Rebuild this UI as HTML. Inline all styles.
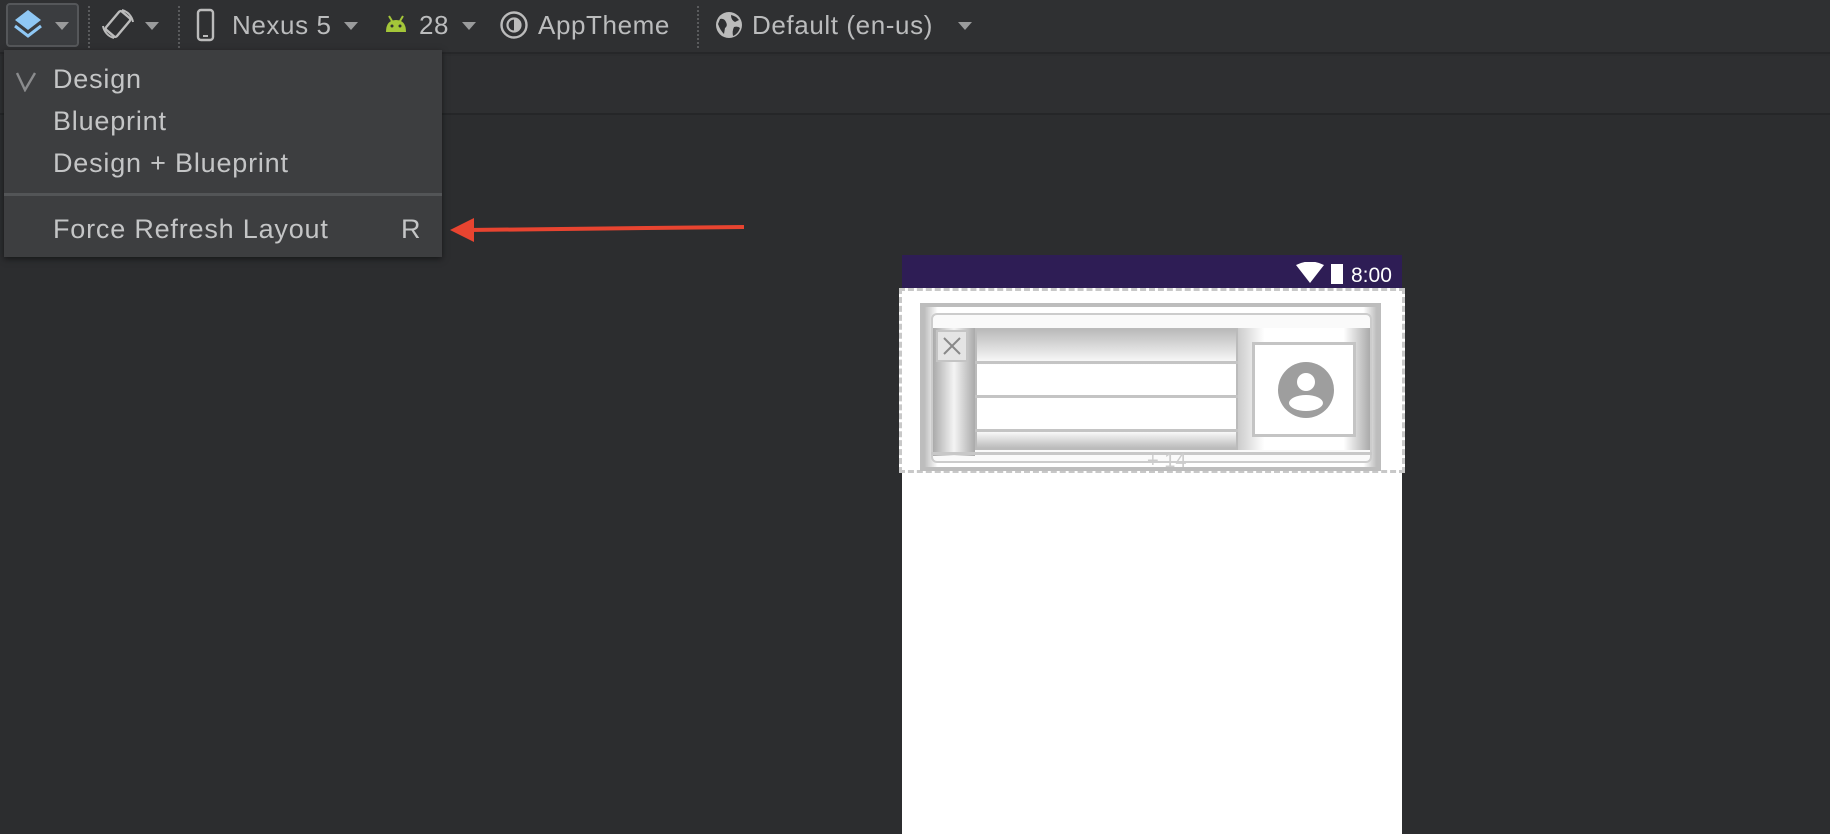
<!DOCTYPE html>
<html><head><meta charset="utf-8"><style>
*{margin:0;padding:0;box-sizing:border-box}
body{width:1830px;height:834px;overflow:hidden;background:#2c2d2f;font-family:"Liberation Sans",sans-serif;position:relative;color:#bbbcbd}
.abs{position:absolute}
.tb{left:0;top:0;width:1830px;height:54px;background:#2f3032;border-bottom:2px solid #262729}
.tb2{left:0;top:56px;width:1830px;height:59px;background:#2e2f31;border-bottom:2px solid #252628}
.t{font-size:26px;color:#bbbcbd;top:10px;white-space:nowrap;letter-spacing:0.6px}
.sep{width:0;border-left:2px dotted #5a5b5d;top:6px;height:42px}
.menu{left:4px;top:50px;width:438px;height:207px;background:#3d3e40;box-shadow:0 2px 6px rgba(0,0,0,.5)}
.mi{font-size:27px;color:#c4c5c6;left:49px;white-space:nowrap;letter-spacing:0.8px}
.phone{left:902px;top:255px;width:500px;height:579px;background:#fff}
</style></head><body>
<div class="abs tb"></div>
<div class="abs tb2"></div>
<div class="abs" style="left:6px;top:3px;width:73px;height:44px;border:2px solid #55575a;border-radius:4px;background:#3b3d40"></div>
<svg class="abs" style="left:10px;top:8px" width="36" height="34" viewBox="0 0 36 34"><path d="M18 2 L31 12 L18 22 L5 12Z" fill="#8fc8f5"/><path d="M5 18 L18 28 L31 18" stroke="#8fc8f5" stroke-width="3" fill="none"/></svg>
<svg class="abs" style="left:55px;top:22px" width="14" height="9"><path d="M0 0H14L7 8Z" fill="#9a9b9c"/></svg>
<div class="abs sep" style="left:88px"></div>
<svg class="abs" style="left:100px;top:6px" width="36" height="36" viewBox="0 0 36 36"><rect x="11" y="6" width="14" height="24" rx="2" transform="rotate(40 18 18)" stroke="#bbb" stroke-width="2.4" fill="none"/><path d="M3 20a15 15 0 0 0 11 12M33 16a15 15 0 0 0-11-12" stroke="#bbb" stroke-width="2" fill="none"/></svg>
<svg class="abs" style="left:145px;top:22px" width="14" height="9"><path d="M0 0H14L7 8Z" fill="#9a9b9c"/></svg>
<div class="abs sep" style="left:178px"></div>
<svg class="abs" style="left:196px;top:8px" width="20" height="34"><rect x="2" y="2" width="15" height="30" rx="3" stroke="#bbb" stroke-width="2.4" fill="none"/><line x1="7" y1="28" x2="12" y2="28" stroke="#bbb" stroke-width="2"/></svg>
<div class="abs t" style="left:232px">Nexus 5</div>
<svg class="abs" style="left:344px;top:22px" width="14" height="9"><path d="M0 0H14L7 8Z" fill="#9a9b9c"/></svg>
<svg class="abs" style="left:384px;top:14px" width="24" height="20"><path d="M2 18 Q2 6 12 6 Q22 6 22 18Z" fill="#a4c639"/><line x1="5" y1="2" x2="8" y2="7" stroke="#a4c639" stroke-width="2"/><line x1="19" y1="2" x2="16" y2="7" stroke="#a4c639" stroke-width="2"/><circle cx="8" cy="12" r="1.5" fill="#2f3032"/><circle cx="16" cy="12" r="1.5" fill="#2f3032"/></svg>
<div class="abs t" style="left:419px">28</div>
<svg class="abs" style="left:462px;top:22px" width="14" height="9"><path d="M0 0H14L7 8Z" fill="#9a9b9c"/></svg>
<svg class="abs" style="left:499px;top:10px" width="30" height="30"><circle cx="15" cy="15" r="12.5" stroke="#bbb" stroke-width="2.4" fill="none"/><circle cx="15" cy="15" r="6.5" stroke="#bbb" stroke-width="2.2" fill="none"/><path d="M15 8.5a6.5 6.5 0 0 1 0 13Z" fill="#bbb"/></svg>
<div class="abs t" style="left:538px">AppTheme</div>
<div class="abs sep" style="left:697px"></div>
<svg class="abs" style="left:714px;top:10px" width="30" height="30"><circle cx="15" cy="15" r="13" fill="#bbb"/><path d="M6 9 Q10 8 12 12 Q14 16 11 18 L10 24 Q6 20 4 14Z M17 5 Q22 6 25 10 L21 12 Q17 10 17 5Z M20 17 Q24 16 26 18 Q24 24 19 26 Q18 21 20 17Z" fill="#2f3032"/></svg>
<div class="abs t" style="left:752px">Default (en-us)</div>
<svg class="abs" style="left:958px;top:22px" width="14" height="9"><path d="M0 0H14L7 8Z" fill="#9a9b9c"/></svg>

<div class="abs menu">
<svg class="abs" style="left:11px;top:20px" width="22" height="22"><path d="M2 3 L10 20 L20 3" stroke="#8a8b8d" stroke-width="2.4" fill="none"/></svg>
<div class="abs mi" style="top:14px">Design</div>
<div class="abs mi" style="top:56px">Blueprint</div>
<div class="abs mi" style="top:98px">Design + Blueprint</div>
<div class="abs" style="left:0;top:143px;width:438px;height:3px;background:#535557"></div>
<div class="abs mi" style="top:164px">Force Refresh Layout</div>
<div class="abs mi" style="top:164px;left:397px">R</div>
</div>
<svg class="abs" style="left:448px;top:212px" width="300" height="34"><line x1="296" y1="15" x2="20" y2="18" stroke="#e84430" stroke-width="4"/><path d="M2 18 L26 6 L26 30Z" fill="#e84430"/></svg>

<div class="abs phone"></div>
<div class="abs" style="left:902px;top:255px;width:500px;height:33px;background:#2e1d55"></div>
<svg class="abs" style="left:1296px;top:262px" width="30" height="22"><path d="M0 3 Q14 -4 28 3 L14 21Z" fill="#fff"/></svg>
<div class="abs" style="left:1331px;top:264px;width:12px;height:20px;background:#fff"></div>
<div class="abs" style="left:1351px;top:264px;font-size:21px;color:#fff">8:00</div>
<div class="abs" style="left:899px;top:288px;width:506px;height:185px;border:3px dashed #c8c8c8;background:#fff"></div>
<div class="abs" style="left:920px;top:303px;width:461px;height:168px;border:4px solid #bdbdbd;background:linear-gradient(90deg,#bbb,#fff 3%,#fff 97%,#bbb)"></div>
<div class="abs" style="left:931px;top:313px;width:441px;height:150px;border:2px solid #ccc;border-radius:6px;background:#fafafa"></div>
<div class="abs" style="left:933px;top:328px;width:42px;height:128px;background:linear-gradient(90deg,#aaa,#f4f4f4,#aaa)"></div>
<div class="abs" style="left:936px;top:330px;width:32px;height:32px;border:2px solid #c4c4c4;background:#e4e4e4"></div>
<svg class="abs" style="left:941px;top:335px" width="22" height="22"><path d="M3 3L19 19M19 3L3 19" stroke="#888" stroke-width="2"/></svg>
<div class="abs" style="left:975px;top:328px;width:263px;height:122px;border:2px solid #bbb;background:linear-gradient(#bbb,#fff 30%,#fff 85%,#bbb)"></div>
<div class="abs" style="left:975px;top:361px;width:263px;height:3px;background:#c4c4c4"></div>
<div class="abs" style="left:975px;top:395px;width:263px;height:3px;background:#c4c4c4"></div>
<div class="abs" style="left:975px;top:429px;width:263px;height:3px;background:#c4c4c4"></div>
<div class="abs" style="left:1238px;top:328px;width:132px;height:122px;background:linear-gradient(90deg,#ccc,#fff 20%,#fff 80%,#aaa)"></div>
<div class="abs" style="left:1252px;top:342px;width:104px;height:95px;border:3px solid #c4c4c4;background:#fff"></div>
<svg class="abs" style="left:1278px;top:362px" width="56" height="56"><circle cx="28" cy="28" r="28" fill="#9e9e9e"/><circle cx="28" cy="20" r="9" fill="#fff"/><ellipse cx="28" cy="41" rx="17" ry="8" fill="#fff"/></svg>
<div class="abs" style="left:931px;top:452px;width:441px;height:3px;background:#c8c8c8"></div>
<div class="abs" style="left:1147px;top:450px;font-size:20px;color:#ccc">+ 14</div>
</body></html>
